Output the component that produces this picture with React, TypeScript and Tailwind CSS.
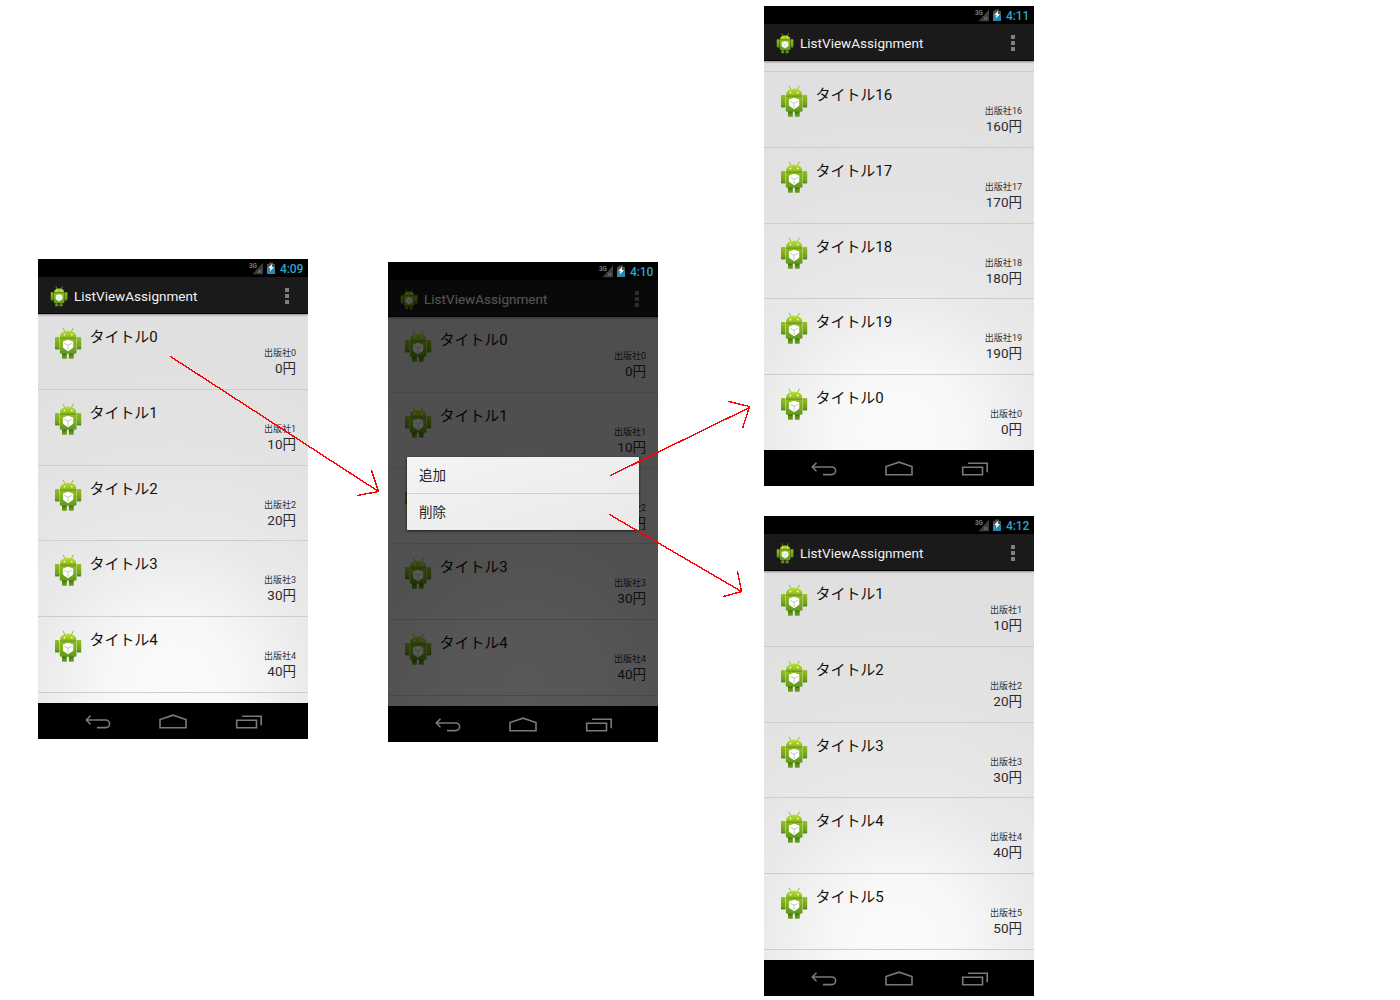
import React from "react";

function Robot({ className }: { className: string }) {
  return (
    <svg viewBox="0 0 28 33" className={className}>
      <defs>
        <linearGradient id="robotBody" x1="0" y1="0" x2="0" y2="1">
          <stop offset="0" stopColor="#93c01f" />
          <stop offset="0.45" stopColor="#7fae1c" />
          <stop offset="1" stopColor="#5f9a1c" />
        </linearGradient>
        <linearGradient id="robotHead" x1="0" y1="0" x2="0" y2="1">
          <stop offset="0" stopColor="#b9e02f" />
          <stop offset="1" stopColor="#8dbb1f" />
        </linearGradient>
        <linearGradient id="robotLeg" x1="0" y1="0" x2="0" y2="1">
          <stop offset="0" stopColor="#23450a" />
          <stop offset="0.5" stopColor="#5b8f14" />
          <stop offset="1" stopColor="#6b9f1d" />
        </linearGradient>
      </defs>
      <path d="M9.2 1.200l1.900 3.800M19.200 1.200l-1.900 3.800" stroke="#9aba3f" strokeWidth="1" strokeLinecap="round" />
      <rect x="8" y="25.500" width="4.800" height="6.300" rx="0.900" fill="url(#robotLeg)" />
      <rect x="14.900" y="25.500" width="4.800" height="6.300" rx="0.900" fill="url(#robotLeg)" />
      <rect x="1" y="10" width="4.400" height="12.600" rx="0.900" fill="url(#robotBody)" />
      <path d="M1.200 21.300h4" stroke="#55801a" strokeWidth="1" />
      <rect x="22.800" y="10" width="4.400" height="12.600" rx="0.900" fill="url(#robotBody)" />
      <path d="M23 21.300h4" stroke="#55801a" strokeWidth="1" />
      <path d="M5.800 10.600h16.700v14.700q0 1.500-1.500 1.500H7.300q-1.500 0-1.500-1.500z" fill="url(#robotBody)" />
      <path d="M6 9.500C6.300 6 9.500 3.800 14.150 3.800s7.900 2.200 8.150 5.700q0 1-1 1H7q-1 0-1-1z" fill="url(#robotHead)" />
      <path d="M6 11h16.300" stroke="#527f0e" strokeWidth="0.900" />
      <circle cx="10.500" cy="7.600" r="0.900" fill="#f4fbd8" />
      <circle cx="17.800" cy="7.600" r="0.900" fill="#f4fbd8" />
      <path d="M14.100 13.300l4.700 1.500v5.800l-4.700 3.200-4.700-3.200v-5.800z" fill="#ffffff" stroke="#ffffff" strokeWidth="1" strokeLinejoin="round" />
      <path d="M10.300 16.400l3.800 1.800 3.800-1.800M14.100 18.200v4.800" stroke="#a5b48f" strokeWidth="0.700" fill="none" />
    </svg>
  );
}

function StatusBar({ time }: { time: string }) {
  return (
    <div className="flex h-[18px] shrink-0 items-center justify-end bg-black pr-[4px]">
      <svg viewBox="0 0 30 18" className="h-[18px] w-[30px]">
        <text x="1" y="8.700" fontSize="6.500" fontWeight="700" fontFamily="Roboto, sans-serif" fill="#777" textLength="8">3G</text>
        <path d="M15 3.500V15.200H4.500z" fill="#3c3c3c" />
        <path d="M10 10.700l3.400 3.400M13.400 10.700l-3.400 3.400" stroke="#858585" strokeWidth="0.900" />
        <path d="M19 5h2V3.600h4V5h2v4.500h-8z" fill="#4b4f52" />
        <path d="M19 8.500h8V15h-8z" fill="#2b87ad" />
        <path d="M24.500 4.500l-4.200 4.300 2.200.5-.8 3.200 4.200-4.200-2.200-.5z" fill="#fff" />
      </svg>
      <span className="ml-[2px] w-[24px] whitespace-nowrap pt-[2px] text-[12px] font-medium leading-[18px] tracking-[-0.100px] text-[#2fa3d0]">{time}</span>
    </div>
  );
}

function ActionBar() {
  return (
    <div className="relative z-10 flex h-[37px] shrink-0 items-center border-b border-black bg-[#1a1a1a] pl-[12px] pr-[18px] pt-[2px] shadow-[0_1px_2px_rgba(0,0,0,0.4)]">
      <Robot className="h-[21px] w-[18px]" />
      <span className="ml-[6px] text-[13.500px] leading-[18px] tracking-[0.020px] text-[#f3f3f3]">ListViewAssignment</span>
      <span className="ml-auto flex w-[5px] flex-col gap-[2px]">
        <i className="h-[4px] w-[4px] bg-[#808080]" />
        <i className="h-[4px] w-[4px] bg-[#808080]" />
        <i className="h-[4px] w-[4px] bg-[#808080]" />
      </span>
    </div>
  );
}

function Row({ n }: { n: number }) {
  return (
    <div className="flex h-[75.750px] shrink-0 border-b border-[#cdcdcd] pl-[16px] pr-[12px] pt-[12px]">
      <Robot className="mt-[1px] h-[33px] w-[28px]" />
      <div className="ml-[7.500px] flex flex-1 flex-col">
        <span className="h-[21px] pt-[1px] text-[15px] leading-[21px] tracking-[-0.050px] text-[#111]">タイトル{n}</span>
        <span className="h-[12px] text-right text-[9px] leading-[12px] text-[#333]">出版社{n}</span>
        <span className="h-[19px] text-right text-[13.500px] leading-[19px] text-[#2b2b2b]">{n * 10}円</span>
      </div>
    </div>
  );
}

function NavBar() {
  return (
    <div className="h-[36px] shrink-0 bg-black">
      <svg viewBox="0 0 270 36" className="h-[36px] w-[270px]" fill="none" stroke="#7a7a7a" strokeWidth="1.600">
        <path d="M52.500 12.800l-4.200 4.200 4.200 4.200M48.500 17h19.300a3.800 3.800 0 0 1 0 7.600H59" />
        <path d="M122 24.800v-8.300l13-4.300 13 4.300v8.300z" />
        <path d="M198.700 17.200h19.800v7.600h-19.800zM204 13.200h19.200v9" />
      </svg>
    </div>
  );
}

function Phone({
  time,
  rows,
  scrolled = false,
  dialog = false,
}: {
  time: string;
  rows: number[];
  scrolled?: boolean;
  dialog?: boolean;
}) {
  return (
    <div className="relative flex h-[480px] w-[270px] flex-col overflow-hidden">
      <StatusBar time={time} />
      <ActionBar />
      <div className="flex min-h-0 flex-1 flex-col overflow-hidden bg-[radial-gradient(circle_at_50%_95%,#fbfbfb_0px,#f8f8f8_60px,#e9e9e9_145px,#e3e3e3_240px,#e0e0e0_340px)]">
        {scrolled && <div className="h-[11px] shrink-0 border-b border-[#cdcdcd]" />}
        {rows.map((n) => (
          <Row key={n} n={n} />
        ))}
      </div>
      <NavBar />
      {dialog && (
        <div className="absolute inset-x-0 bottom-[36px] top-[18px] z-20 bg-black/[0.650]">
          <div className="absolute left-[19px] top-[177px] h-[72.500px] w-[232px] rounded-[1px] bg-gradient-to-br from-[#f4f4f4] to-[#e9e9e9] px-[12px] shadow-[0_1px_3px_rgba(0,0,0,0.700)]">
            <div className="-mx-[12px] h-[37px] border-b border-[#d0d0d0] px-[12px] text-[13.500px] leading-[36px] text-[#222]">追加</div>
            <div className="h-[35px] text-[13.500px] leading-[36px] text-[#222]">削除</div>
          </div>
        </div>
      )}
    </div>
  );
}

export default function App() {
  return (
    <div className="relative flex h-[1000px] w-[1400px] items-start overflow-hidden bg-white [font-family:Roboto,'Noto_Sans_CJK_JP',sans-serif]">
      <div className="ml-[38px] mt-[259px]">
        <Phone time="4:09" rows={[0, 1, 2, 3, 4]} />
      </div>
      <div className="ml-[80px] mt-[262px]">
        <Phone time="4:10" rows={[0, 1, 2, 3, 4]} dialog />
      </div>
      <div className="ml-[106px] mt-[6px] flex flex-col gap-[30px]">
        <Phone time="4:11" rows={[16, 17, 18, 19, 0]} scrolled />
        <Phone time="4:12" rows={[1, 2, 3, 4, 5]} />
      </div>
      <svg className="pointer-events-none absolute inset-0 z-30" width="1400" height="1000" fill="none" stroke="#ff0000" strokeWidth="1.400" shapeRendering="crispEdges">
        <path d="M170.500 356.500L378.500 491.500M371.500 470.500L378.500 491.500L357.500 495.500" />
        <path d="M610.500 475.500L749.500 407.500M728.500 401.500L749.500 406.500L742.500 428.500" />
        <path d="M609.500 514.500L741.500 591.500M737.500 571.500L741.500 591.500L723.500 596.500" />
      </svg>
    </div>
  );
}
